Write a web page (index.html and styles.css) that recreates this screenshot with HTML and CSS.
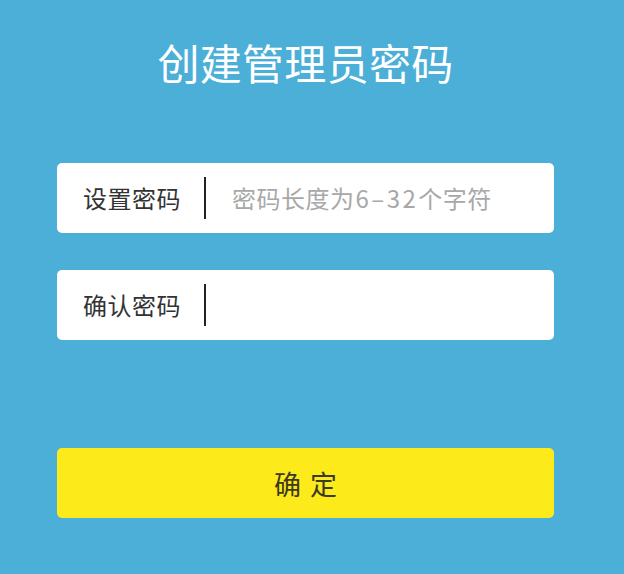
FILE: index.html
```html
<!DOCTYPE html>
<html lang="zh">
<head>
<meta charset="utf-8">
<link rel="stylesheet" href="styles.css">
</head>
<body>
<div class="page">
  <h1 class="title">创建管理员密码</h1>
  <div class="field first">
    <span class="label">设置密码</span>
    <span class="divider"></span>
    <span class="placeholder">密码长度为<span class="num">6–32</span>个字符</span>
  </div>
  <div class="field">
    <span class="label">确认密码</span>
    <span class="divider"></span>
  </div>
  <div class="button">确 定</div>
</div>
</body>
</html>
```
FILE: styles.css
```css
html, body {
  margin: 0;
  padding: 0;
  background: #4bafd7;
  height: 100%;
}
body {
  font-family: "Noto Sans CJK SC", "Noto Sans", sans-serif;
}
.page {
  width: 497px;
  margin-left: 57px;
  padding-top: 31px;
  display: flex;
  flex-direction: column;
}
.title {
  margin: 0;
  text-align: center;
  color: #ffffff;
  font-size: 42px;
  font-weight: 400;
  line-height: 62px;
  letter-spacing: 0.3px;
}
.field {
  height: 70px;
  background: #ffffff;
  border-radius: 5px;
  display: flex;
  align-items: center;
  padding-left: 26px;
  margin-top: 37px;
}
.field.first {
  margin-top: 70px;
}
.label {
  font-size: 24px;
  color: #333333;
  width: 121px;
  line-height: 30px;
  letter-spacing: 0.5px;
}
.divider {
  width: 2px;
  height: 42px;
  background: #222222;
}
.placeholder {
  margin-left: 26px;
  font-size: 24px;
  color: #a8a8a8;
  line-height: 30px;
  letter-spacing: 0.5px;
}
.num {
  letter-spacing: 2.5px;
  margin-left: 1px;
}
.button {
  margin-top: 108px;
  height: 70px;
  background: #fcea1b;
  border-radius: 5px;
  display: flex;
  align-items: center;
  justify-content: center;
  font-size: 27px;
  color: #3b3a22;
  word-spacing: 3px;
}
```
